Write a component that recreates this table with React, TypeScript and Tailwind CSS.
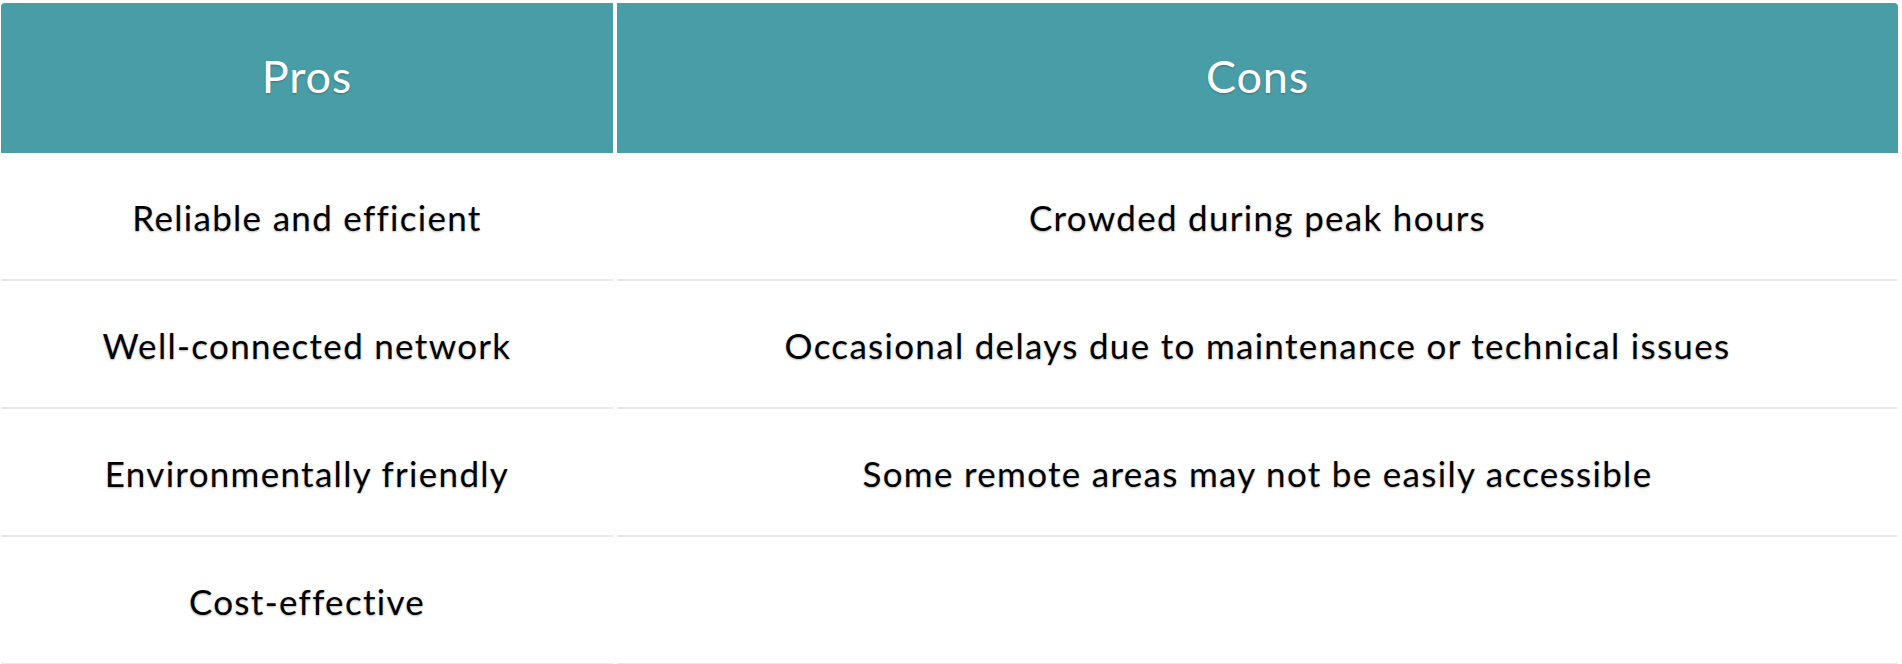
const rows: [string, string][] = [
  ['Reliable and efficient', 'Crowded during peak hours'],
  ['Well-connected network', 'Occasional delays due to maintenance or technical issues'],
  ['Environmentally friendly', 'Some remote areas may not be easily accessible'],
  ['Cost-effective', ''],
]

const head =
  'flex h-[150px] items-center justify-center bg-[#489da6] pb-[2px] text-[45px] font-normal tracking-[0.8px] text-white [text-shadow:0_1px_2px_rgba(0,0,0,0.25)]'

const cell =
  'flex h-[128px] items-center justify-center border-b-2 border-[#e9e9e9] pt-[3px] text-[35px] tracking-[1.3px] text-black [text-shadow:0_1px_2px_rgba(0,0,0,0.3)]'

export default function App() {
  return (
    <div className="min-h-screen bg-white pt-[3px] pr-[4px] pl-[1px] font-['Lato',sans-serif]">
      <div className="grid grid-cols-[612px_1fr] gap-x-[4px]">
        <div className={`${head} rounded-tl-[4px]`}>Pros</div>
        <div className={`${head} rounded-tr-[4px]`}>Cons</div>
        {rows.map(([pro, con], i) => {
          const last = i === rows.length - 1
          return [
            <div key={`p${i}`} className={last ? `${cell} rounded-bl-[4px]` : cell}>
              {pro}
            </div>,
            <div key={`c${i}`} className={last ? `${cell} rounded-br-[4px]` : cell}>
              {con}
            </div>,
          ]
        })}
      </div>
    </div>
  )
}
